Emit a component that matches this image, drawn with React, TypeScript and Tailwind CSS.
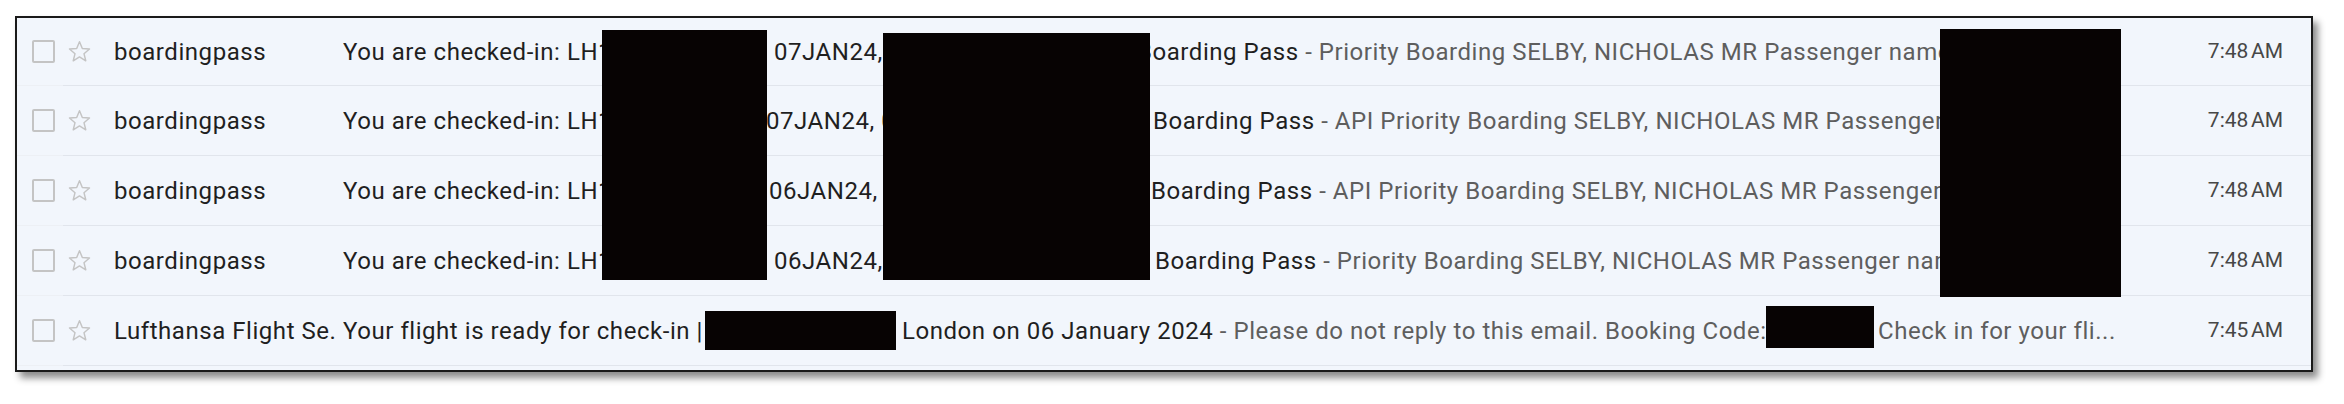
import React from "react";

type Row = {
  sender: string;
  time: string;
  parts: React.ReactNode;
};

const dark = "text-[#1f1f1f]";
const grey = "text-[#5e5e5e]";

function Checkbox() {
  return <div className="w-[23px] h-[23px] border-2 border-[#c4c4c4] rounded-[2px] shrink-0" />;
}

function StarIcon() {
  return (
    <svg width="27" height="25" viewBox="0 0 24 24" className="shrink-0">
      <polygon
        points="12,2.6 14.7,9.1 21.6,9.6 16.3,14.1 18,20.9 12,17.2 6,20.9 7.7,14.1 2.4,9.6 9.3,9.1"
        fill="none"
        stroke="#c4c4c4"
        strokeWidth="1.4"
        strokeLinejoin="round"
      />
    </svg>
  );
}

const rows: Row[] = [
  {
    sender: "boardingpass",
    time: "7:48\u202FAM",
    parts: (
      <>
        <span className="w-[431px] shrink-0 overflow-hidden">You are checked-in: LH1</span>
        <span className="w-[363px] shrink-0">07JAN24,</span>
        <span className="truncate">
          Boarding Pass <span className={grey}>- Priority Boarding SELBY, NICHOLAS MR Passenger name</span>
        </span>
      </>
    ),
  },
  {
    sender: "boardingpass",
    time: "7:48\u202FAM",
    parts: (
      <>
        <span className="w-[423px] shrink-0 overflow-hidden">You are checked-in: LH1</span>
        <span className="w-[387px] shrink-0 overflow-hidden">07JAN24, 0</span>
        <span className="truncate">
          Boarding Pass <span className={grey}>- API Priority Boarding SELBY, NICHOLAS MR Passenger</span>
        </span>
      </>
    ),
  },
  {
    sender: "boardingpass",
    time: "7:48\u202FAM",
    parts: (
      <>
        <span className="w-[426px] shrink-0 overflow-hidden">You are checked-in: LH1</span>
        <span className="w-[382px] shrink-0">06JAN24,</span>
        <span className="truncate">
          Boarding Pass <span className={grey}>- API Priority Boarding SELBY, NICHOLAS MR Passenger</span>
        </span>
      </>
    ),
  },
  {
    sender: "boardingpass",
    time: "7:48\u202FAM",
    parts: (
      <>
        <span className="w-[431px] shrink-0 overflow-hidden">You are checked-in: LH1</span>
        <span className="w-[381px] shrink-0">06JAN24,</span>
        <span className="truncate">
          Boarding Pass <span className={grey}>- Priority Boarding SELBY, NICHOLAS MR Passenger nam</span>
        </span>
      </>
    ),
  },
  {
    sender: "Lufthansa Flight Se.",
    time: "7:45\u202FAM",
    parts: (
      <>
        <span className="w-[362px] shrink-0 overflow-hidden">Your flight is ready for check-in |</span>
        <span className="w-[191px] h-[39px] bg-[#070303] shrink-0" />
        <span className="w-[870px] shrink-0 pl-[6px] overflow-hidden">
          London on 06 January 2024 <span className={grey}>- Please do not reply to this email. Booking Code:</span>
        </span>
        <span className="w-[108px] h-[42px] bg-[#070303] shrink-0 mb-[8px]" />
        <span className={`pl-[4px] truncate ${grey}`}>Check in for your fli...</span>
      </>
    ),
  },
];

export default function App() {
  return (
    <div className="w-[2344px] h-[404px] bg-white pt-[16px] pl-[15px]" style={{ fontFamily: "Roboto, 'Liberation Sans', sans-serif" }}>
      <div className="relative w-[2298px] h-[356px] border-2 border-[#1a1a1a] bg-[#f2f6fc] overflow-hidden shadow-[5px_6px_7px_rgba(0,0,0,0.45)]">
        <div className="flex flex-col">
          {rows.map((r, i) => (
            <div key={i} className="flex flex-col">
              <div className={`flex items-center ${i === 0 ? "h-[67px]" : "h-[69px]"} pl-[15px] pr-[28px] text-[24px] tracking-[0.55px] ${dark}`}>
                <Checkbox />
                <div className="ml-[11px]">
                  <StarIcon />
                </div>
                <div className="ml-[21px] w-[229px] shrink-0 whitespace-nowrap overflow-hidden">{r.sender}</div>
                <div className="flex-1 min-w-0 flex items-center whitespace-nowrap overflow-hidden">{r.parts}</div>
                <div className="w-[110px] shrink-0 text-right text-[21px] tracking-normal text-[#474747]">{r.time}</div>
              </div>
              <div className="flex h-px">
                <div className="w-[46px] bg-[#edf0f5]" />
                <div className="flex-1 bg-[#e1e5ec]" />
              </div>
            </div>
          ))}
        </div>
        <div className="absolute left-[585px] top-[12px] w-[165px] h-[250px] bg-[#070303]" />
        <div className="absolute left-[866px] top-[15px] w-[267px] h-[247px] bg-[#070303]" />
        <div className="absolute left-[1923px] top-[11px] w-[181px] h-[268px] bg-[#070303]" />
      </div>
    </div>
  );
}
